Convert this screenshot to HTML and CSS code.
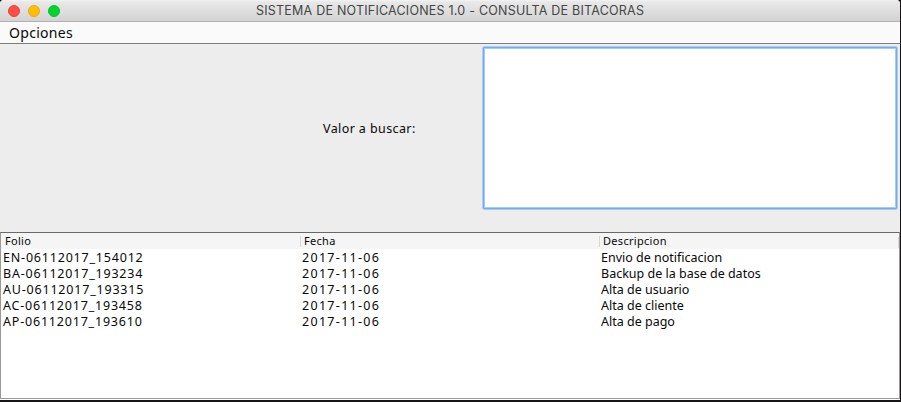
FILE: index.html
```html
<!DOCTYPE html>
<html lang="es">
<head>
<meta charset="utf-8">
<title>SISTEMA DE NOTIFICACIONES 1.0 - CONSULTA DE BITACORAS</title>
<link rel="stylesheet" href="styles.css">
</head>
<body>
<main class="window">
  <header class="titlebar">
    <div class="controls"><i class="dot red"></i><i class="dot yellow"></i><i class="dot green"></i></div>
    <h1><span>SISTEMA DE NOTIFICACIONES 1.0 - CONSULTA DE BITACORAS</span></h1>
  </header>
  <nav class="menubar"><span>Opciones</span></nav>
  <section class="search">
    <label for="valor"><span>Valor a buscar:</span></label>
    <input id="valor" class="field" type="text">
  </section>
  <section class="table">
    <div class="row head"><span class="h1">Folio</span><span class="h2">Fecha</span><span class="h3">Descripcion</span></div>
    <div class="row"><span class="folio">EN-06112017_154012</span><span class="fecha">2017-11-06</span><span>Envio de notificacion</span></div>
    <div class="row"><span class="folio">BA-06112017_193234</span><span class="fecha">2017-11-06</span><span>Backup de la base de datos</span></div>
    <div class="row"><span class="folio">AU-06112017_193315</span><span class="fecha">2017-11-06</span><span>Alta de usuario</span></div>
    <div class="row"><span class="folio">AC-06112017_193458</span><span class="fecha">2017-11-06</span><span>Alta de cliente</span></div>
    <div class="row"><span class="folio">AP-06112017_193610</span><span class="fecha">2017-11-06</span><span>Alta de pago</span></div>
  </section>
</main>
</body>
</html>
```
FILE: styles.css
```css
* { box-sizing: border-box; }
body {
  margin: 0;
  height: 402px;
  overflow: hidden;
  background: #171516;
  color: #080808;
  font-family: "Noto Sans", "Open Sans", sans-serif;
}
.window {
  display: flex;
  flex-direction: column;
  width: 900px;
  height: 400px;
  background: #fff;
  border-radius: 4px 4px 0 0;
  overflow: hidden;
}
.titlebar {
  display: grid;
  grid-template-columns: 256px 1fr;
  align-items: center;
  height: 22px;
  background: linear-gradient(#f3f3f3 0, #e8e8e8 2px, #d3d3d3 21px);
  border-bottom: 1px solid #b0b0b0;
}
.controls { display: flex; gap: 8px; padding-left: 8px; }
.dot { width: 12px; height: 12px; border-radius: 50%; border: 1px solid; }
.red { background: #ff4c46; border-color: #e9423b; }
.yellow { background: #ffbe00; border-color: #e8a918; }
.green { background: #00d52d; border-color: #14bb2e; }
.titlebar h1 {
  margin: 0;
  font: 400 12.5px/22px Inter, sans-serif;
  letter-spacing: 0.22px;
  color: #454545;
  white-space: nowrap;
}
.menubar {
  height: 22px;
  padding-left: 9px;
  background: #fafafa;
  border-bottom: 1px solid #7c7e79;
  font-size: 14px;
  line-height: 22px;
  letter-spacing: 0.3px;
}
.search {
  display: grid;
  grid-template-columns: 482px 416px;
  height: 188px;
  padding-top: 2px;
  background: #ededed;
}
.search label {
  height: 164px;
  padding-left: 323px;
  font-size: 12.5px;
  line-height: 165px;
  letter-spacing: 0.4px;
}
.field {
  width: 416px;
  height: 164px;
  border: 1px solid #a9cef6;
  border-radius: 2px;
  background: #fff;
  box-shadow: inset 0 0 0 1px #76aaea, inset 0 0 0 2px #a5cbf8;
  outline: 0;
}
.table {
  height: 167px;
  border: 1px solid #999;
  border-top-color: #686868;
  background: #fff;
}
.row {
  display: grid;
  grid-template-columns: 299px 299px 1fr;
  height: 16px;
  padding-left: 2px;
  font-size: 12.5px;
  line-height: 17px;
  white-space: nowrap;
}
.folio { letter-spacing: 0.8px; }
.fecha { letter-spacing: 1.3px; }
.head {
  background: linear-gradient(90deg, transparent 897px, #d8d8d8 897px) 0 4px / 898px 11px no-repeat #f5f5f5;
  font-size: 11px;
  line-height: 16px;
  letter-spacing: 0.3px;
  padding-left: 0;
}
.head span { padding-left: 4px; }
.head .h2, .head .h3 {
  height: 11px;
  margin-top: 3px;
  padding-left: 3px;
  line-height: 10px;
  border-left: 1px solid #d8d8d8;
}
```
